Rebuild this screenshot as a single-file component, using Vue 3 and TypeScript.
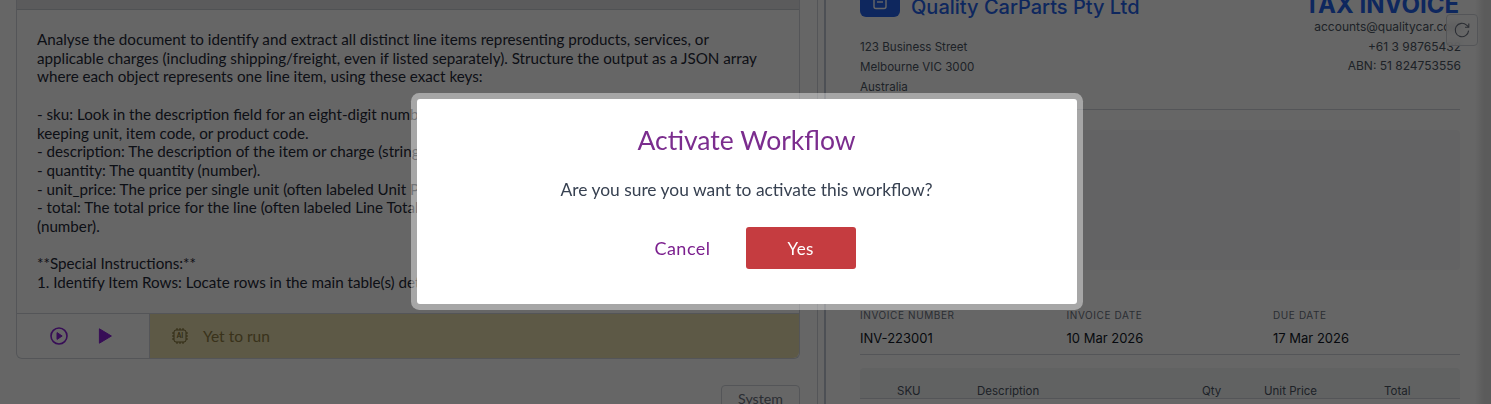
<template>
  <div class="page">
    <section class="left">
      <div class="prompt-card">
        <div class="card-top"></div>
        <div class="prompt-body">{{ promptText }}</div>
        <div class="card-footer">
          <div class="run-actions">
            <svg class="icon" width="20" height="20" viewBox="0 0 20 20" fill="none">
              <circle cx="10" cy="10" r="8" stroke="currentColor" stroke-width="1.6" />
              <path d="M8 6.6v6.8l5.2-3.4z" fill="currentColor" stroke="currentColor" stroke-width="1" stroke-linejoin="round" />
            </svg>
            <svg class="icon" width="20" height="20" viewBox="0 0 20 20">
              <path d="M4.4 2.8v14.4l12-7.2z" fill="currentColor" stroke="currentColor" stroke-width="1" stroke-linejoin="round" />
            </svg>
          </div>
          <div class="run-status">
            <svg class="chip" width="18" height="18" viewBox="0 0 18 18" fill="none" stroke="currentColor" stroke-width="1">
              <rect x="3" y="3" width="12" height="12" rx="2" />
              <path d="M6 1v2M9 1v2M12 1v2M6 15v2M9 15v2M12 15v2M1 6h2M1 9h2M1 12h2M15 6h2M15 9h2M15 12h2" />
              <text x="9" y="11.2" text-anchor="middle" class="chip-text">AI</text>
            </svg>
            <span>Yet to run</span>
          </div>
        </div>
      </div>
      <div class="tabs">
        <button class="tab">System</button>
      </div>
    </section>

    <section class="right">
      <div class="pane">
        <div class="invoice">
          <header class="inv-head">
            <div class="inv-from">
              <div class="brand">
                <span class="logo">
                  <svg width="18" height="18" viewBox="0 0 18 18" fill="none" stroke="#fff" stroke-width="1.4">
                    <rect x="3" y="2.5" width="12" height="13" rx="2" />
                    <path d="M6 9h6" />
                  </svg>
                </span>
                <span class="company">Quality CarParts Pty Ltd</span>
              </div>
              <p>123 Business Street</p>
              <p>Melbourne VIC 3000</p>
              <p>Australia</p>
            </div>
            <div class="inv-to">
              <div class="inv-title">TAX INVOICE</div>
              <p>accounts@qualitycar.com</p>
              <p>+61 3 98765432</p>
              <p>ABN: 51 824753556</p>
            </div>
          </header>

          <div class="bill-box"></div>

          <div class="meta">
            <div v-for="m in meta" :key="m.label" class="meta-item">
              <div class="meta-label">{{ m.label }}</div>
              <div class="meta-value">{{ m.value }}</div>
            </div>
          </div>

          <div class="table-head">
            <span class="col-sku">SKU</span>
            <span class="col-desc">Description</span>
            <span class="col-qty">Qty</span>
            <span class="col-unit">Unit Price</span>
            <span class="col-total">Total</span>
          </div>
        </div>
      </div>
      <button class="refresh" aria-label="Refresh">
        <svg width="20" height="20" viewBox="0 0 20 20" fill="none" stroke="currentColor" stroke-width="1.1">
          <path d="M16.6 10.6a6.7 6.7 0 1 1-2-5.4l2 1.8" />
          <path d="M16.8 3.4v3.8h-3.8" />
        </svg>
      </button>
    </section>

    <div class="overlay">
      <div class="modal">
        <h2 class="modal-title">Activate Workflow</h2>
        <p class="modal-text">Are you sure you want to activate this workflow?</p>
        <div class="modal-actions">
          <button class="btn-cancel">Cancel</button>
          <button class="btn-yes">Yes</button>
        </div>
      </div>
    </div>
  </div>
</template>

<script setup lang="ts">
interface MetaItem {
  label: string
  value: string
}

const promptText = `Analyse the document to identify and extract all distinct line items representing products, services, or applicable charges (including shipping/freight, even if listed separately). Structure the output as a JSON array where each object represents one line item, using these exact keys:

- sku: Look in the description field for an eight-digit number. This may be labelled as SKU, stock
keeping unit, item code, or product code.
- description: The description of the item or charge (string).
- quantity: The quantity (number).
- unit_price: The price per single unit (often labeled Unit Price or Rate) (number).
- total: The total price for the line (often labeled Line Total, Amount or Extended Price)
(number).

**Special Instructions:**
1. Identify Item Rows: Locate rows in the main table(s) detailing the items.`

const meta: MetaItem[] = [
  { label: 'INVOICE NUMBER', value: 'INV-223001' },
  { label: 'INVOICE DATE', value: '10 Mar 2026' },
  { label: 'DUE DATE', value: '17 Mar 2026' },
]
</script>

<style>
html,
body {
  margin: 0;
  overflow: hidden;
}
</style>

<style scoped>
.page {
  position: relative;
  display: flex;
  width: 1491px;
  height: 404px;
  overflow: hidden;
  background: #ffffff;
  font-family: Lato, "Liberation Sans", sans-serif;
  color: #374151;
}

.left {
  width: 818px;
  flex: none;
  box-sizing: border-box;
  padding: 0 17px 0 16px;
  border-right: 1px solid #d1d5db;
}

.prompt-card {
  border: 1px solid #d1d5db;
  border-top: none;
  border-radius: 0 0 6px 6px;
  background: #ffffff;
}

.card-top {
  height: 9px;
  background: #e3e3e5;
  border-bottom: 1px solid #c9cdd3;
}

.prompt-body {
  height: 303px;
  box-sizing: border-box;
  padding: 20px 24px 0 20px;
  overflow: hidden;
  font-size: 15.2px;
  line-height: 18.7px;
  white-space: pre-wrap;
  color: #1f2937;
}

.card-footer {
  display: flex;
  height: 44px;
  border-top: 1px solid #d1d5db;
}

.run-actions {
  display: flex;
  align-items: center;
  gap: 26px;
  width: 133px;
  box-sizing: border-box;
  padding: 0 0 1px 32px;
  border-right: 1px solid #d1d5db;
  color: #8a22d8;
}

.run-status {
  flex: 1;
  display: flex;
  align-items: center;
  gap: 14px;
  padding: 0 0 1px 21px;
  border-radius: 0 0 6px 0;
  background: #e8dfae;
  color: #8f7d45;
  font-size: 15.5px;
}

.chip {
  color: #7a6a30;
}

.chip-text {
  font-family: Lato, sans-serif;
  font-size: 6.5px;
  font-weight: 700;
  fill: currentColor;
  stroke: none;
}

.tabs {
  display: flex;
  justify-content: flex-end;
  margin-top: 26px;
}

.tab {
  width: 79px;
  height: 27px;
  padding: 0;
  border: 1px solid #d1d5db;
  border-radius: 4px;
  background: #ffffff;
  color: #6b7280;
  font-family: inherit;
  font-size: 14.2px;
}

.right {
  position: relative;
  flex: 1;
  display: flex;
  overflow: hidden;
  padding-left: 6px;
}

.pane {
  flex: 1;
  border-left: 2px solid #c0c8d4;
  background: linear-gradient(to right, #ffffff 0, #ffffff 649px, #e4e4e4 658px);
}

.invoice {
  width: 600px;
  height: 420px;
  margin: -14px 0 0 34px;
  font-family: Inter, "Liberation Sans", sans-serif;
  color: #4b5563;
}

.inv-head {
  display: flex;
  justify-content: space-between;
  height: 124px;
  box-sizing: border-box;
  border-bottom: 1px solid #d1d5db;
}

.inv-head p {
  margin: 0;
  font-size: 11.6px;
  line-height: 20px;
}

.brand {
  display: flex;
  align-items: flex-start;
  gap: 11px;
  height: 36px;
  margin-bottom: 15px;
}

.logo {
  display: flex;
  align-items: center;
  justify-content: center;
  width: 40px;
  height: 31px;
  border-radius: 6px;
  background: #2563eb;
}

.company {
  padding-top: 7px;
  font-size: 20px;
  font-weight: 500;
  line-height: 28px;
  color: #2563eb;
}

.inv-to {
  text-align: right;
  margin-right: -1px;
}

.inv-title {
  height: 27px;
  padding: 4px 2px 0 0;
  font-size: 24px;
  font-weight: 700;
  line-height: 30px;
  color: #2563eb;
}

.inv-to p {
  font-size: 12px;
  line-height: 19.5px;
}

.bill-box {
  height: 140px;
  margin-top: 20px;
  border-radius: 4px;
  background: #f8f8f9;
}

.meta {
  display: grid;
  grid-template-columns: 206.5px 206.5px 1fr;
  height: 46px;
  margin-top: 38px;
  border-bottom: 1px solid #d1d5db;
}

.meta-label {
  font-size: 10px;
  line-height: 14px;
  letter-spacing: 0.6px;
  color: #6b7280;
}

.meta-value {
  margin-top: 7px;
  font-size: 13px;
  line-height: 18px;
  color: #111827;
}

.table-head {
  display: flex;
  align-items: center;
  height: 15px;
  margin-top: 13px;
  padding-top: 15px;
  box-sizing: content-box;
  border-radius: 4px 4px 0 0;
  border-bottom: 1px solid #d1d5db;
  background: #f3f4f6;
  font-size: 11.5px;
  color: #4b5563;
}

.col-sku {
  width: 117px;
  padding-left: 37px;
  box-sizing: border-box;
}

.col-desc {
  width: 225px;
}

.col-qty {
  width: 62px;
}

.col-unit {
  width: 120px;
}

.col-total {
  width: 60px;
}

.refresh {
  position: absolute;
  top: 14px;
  left: 628px;
  display: flex;
  align-items: center;
  justify-content: center;
  width: 32px;
  height: 32px;
  padding: 0;
  border: 1px solid #d1d5db;
  border-radius: 4px;
  background: rgba(255, 255, 255, 0.7);
  backdrop-filter: blur(3px);
  color: #6b7280;
}

.overlay {
  position: absolute;
  inset: 0;
  display: flex;
  align-items: flex-start;
  justify-content: center;
  background: rgba(0, 0, 0, 0.6);
}

.modal {
  display: flex;
  flex-direction: column;
  align-items: center;
  width: 660px;
  height: 205px;
  box-sizing: border-box;
  margin: 99px 0 0 2px;
  padding-top: 24px;
  border-radius: 3px;
  background: #ffffff;
  box-shadow: 0 0 0 6px rgba(255, 255, 255, 0.42);
}

.modal-title {
  margin: 0;
  font-size: 26.5px;
  font-weight: 400;
  line-height: 34px;
  color: #7b2d8e;
}

.modal-text {
  margin: 20px 0 0;
  font-size: 17.4px;
  line-height: 26px;
  color: #374151;
}

.modal-actions {
  display: flex;
  align-items: center;
  gap: 35px;
  margin-top: 24px;
  margin-left: 17px;
}

.btn-cancel {
  padding: 0;
  border: none;
  background: none;
  color: #7b1f8e;
  font-family: inherit;
  font-size: 18px;
  letter-spacing: 0.5px;
}

.btn-yes {
  width: 110px;
  height: 42px;
  padding: 0;
  border: none;
  border-radius: 3px;
  background: #c53c40;
  color: #ffffff;
  font-family: inherit;
  font-size: 17px;
  letter-spacing: 0.3px;
}
</style>
